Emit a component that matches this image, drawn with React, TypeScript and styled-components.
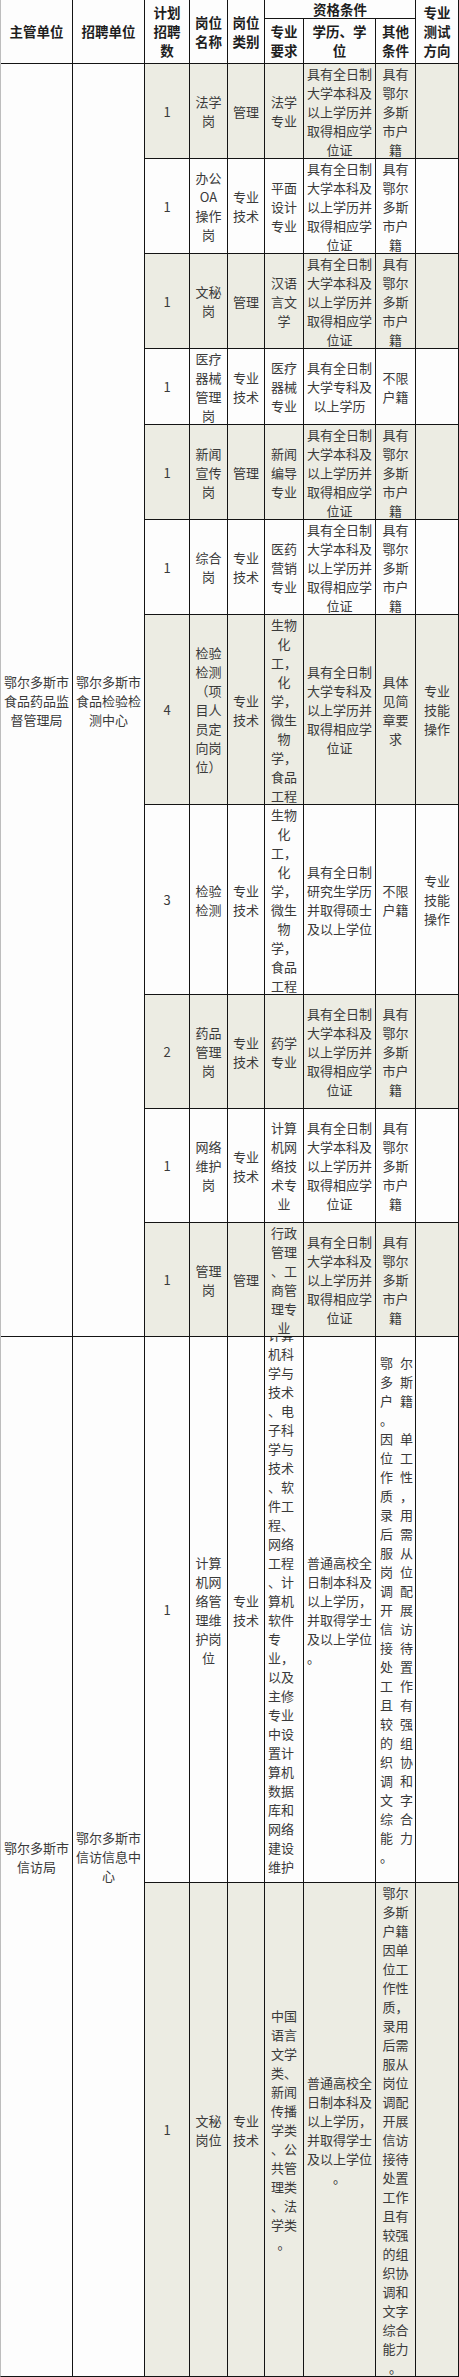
import * as React from 'react'
import styled, { createGlobalStyle } from 'styled-components'

const Global = createGlobalStyle`
  html, body {
    margin: 0;
    padding: 0;
    background: #fff;
  }
  body {
    font-family: "Noto Sans CJK SC", "Noto Sans", sans-serif;
  }
`

type Align = 'center' | 'left' | 'justify'

const Sheet = styled.div`
  display: grid;
  width: 459px;
  box-sizing: border-box;
  grid-template-columns: 71px 71px 44px 37px 36px 38px 71px 39px 42px;
  grid-template-rows: 18px 44px 94px 94px 94px 75px 94px 94px 189px 189px 113px 113px 113px 545px 493px;
  gap: 1px;
  background: #141414;
  border-left: 1px solid #bdbdbd;
  border-right: 1px solid #141414;
  border-bottom: 1px solid #141414;
`

const Cell = styled.div<{
  $col: number
  $row: number
  $colSpan?: number
  $rowSpan?: number
  $shade?: boolean
  $align?: Align
}>`
  grid-column: ${(p) => p.$col} / span ${(p) => p.$colSpan || 1};
  grid-row: ${(p) => p.$row} / span ${(p) => p.$rowSpan || 1};
  display: flex;
  flex-direction: column;
  justify-content: center;
  overflow: hidden;
  background: ${(p) => (p.$shade ? '#ecece3' : '#fdfdfd')};
  color: #3a3a3a;
  font-size: 13px;
  line-height: 19px;
  white-space: nowrap;
  padding: ${(p) => (p.$align === 'justify' ? '0 2px 0 4px' : '0 3px')};
  text-align: ${(p) => (p.$align === 'left' ? 'left' : 'center')};
`

const HeadCell = styled(Cell)`
  color: #1e1e1e;
  font-weight: 700;
  font-size: 13.5px;
  background: #fdfdfd;
`

const Line = styled.span<{ $justify?: boolean }>`
  display: block;
  text-align: ${(p) => (p.$justify ? 'justify' : 'inherit')};
  text-align-last: ${(p) => (p.$justify ? 'justify' : 'auto')};
`

type Row = {
  n: string
  name: string[]
  kind: string[]
  major: string[]
  edu: string[]
  other: string[]
  test?: string[]
  shade?: boolean
  majorAlign?: Align
  eduAlign?: Align
  otherAlign?: Align
}

const BK = ['具有全日制', '大学本科及', '以上学历并', '取得相应学', '位证']
const HJ = ['具有', '鄂尔', '多斯', '市户', '籍']
const JS = ['专业', '技术']
const BIO = ['生物', '化', '工，', '化', '学，', '微生', '物', '学，', '食品', '工程']
const SKILL = ['专业', '技能', '操作']
const PT = ['普通高校全', '日制本科及', '以上学历，', '并取得学士', '及以上学位', '。']

const rows: Row[] = [
  { n: '1', name: ['法学', '岗'], kind: ['管理'], major: ['法学', '专业'], edu: BK, other: HJ, shade: true },
  { n: '1', name: ['办公', 'OA', '操作', '岗'], kind: JS, major: ['平面', '设计', '专业'], edu: BK, other: HJ },
  { n: '1', name: ['文秘', '岗'], kind: ['管理'], major: ['汉语', '言文', '学'], edu: BK, other: HJ, shade: true },
  { n: '1', name: ['医疗', '器械', '管理', '岗'], kind: JS, major: ['医疗', '器械', '专业'], edu: ['具有全日制', '大学专科及', '以上学历'], other: ['不限', '户籍'] },
  { n: '1', name: ['新闻', '宣传', '岗'], kind: ['管理'], major: ['新闻', '编导', '专业'], edu: BK, other: HJ, shade: true },
  { n: '1', name: ['综合', '岗'], kind: JS, major: ['医药', '营销', '专业'], edu: BK, other: HJ },
  {
    n: '4',
    name: ['检验', '检测', '（项', '目人', '员定', '向岗', '位）'],
    kind: JS,
    major: BIO,
    edu: ['具有全日制', '大学专科及', '以上学历并', '取得相应学', '位证'],
    other: ['具体', '见简', '章要', '求'],
    test: SKILL,
    shade: true,
  },
  {
    n: '3',
    name: ['检验', '检测'],
    kind: JS,
    major: BIO,
    edu: ['具有全日制', '研究生学历', '并取得硕士', '及以上学位'],
    other: ['不限', '户籍'],
    test: SKILL,
  },
  { n: '2', name: ['药品', '管理', '岗'], kind: JS, major: ['药学', '专业'], edu: BK, other: HJ, shade: true },
  { n: '1', name: ['网络', '维护', '岗'], kind: JS, major: ['计算', '机网', '络技', '术专', '业'], edu: BK, other: HJ },
  { n: '1', name: ['管理', '岗'], kind: ['管理'], major: ['行政', '管理', '、工', '商管', '理专', '业'], edu: BK, other: HJ, shade: true },
  {
    n: '1',
    name: ['计算', '机网', '络管', '理维', '护岗', '位'],
    kind: JS,
    major: [
      '计算', '机科', '学与', '技术', '、电', '子科', '学与', '技术', '、软', '件工',
      '程、', '网络', '工程', '、计', '算机', '软件', '专', '业，', '以及', '主修',
      '专业', '中设', '置计', '算机', '数据', '库和', '网络', '建设', '维护', '，',
    ],
    majorAlign: 'left',
    edu: PT,
    eduAlign: 'left',
    other: [
      '鄂尔', '多斯', '户籍', '。', '因单', '位工', '作性', '质，', '录用', '后需',
      '服从', '岗位', '调配', '开展', '信访', '接待', '处置', '工作', '且有', '较强',
      '的组', '织协', '调和', '文字', '综合', '能力', '。',
    ],
    otherAlign: 'justify',
  },
  {
    n: '1',
    name: ['文秘', '岗位'],
    kind: JS,
    major: ['中国', '语言', '文学', '类、', '新闻', '传播', '学类', '、公', '共管', '理类', '、法', '学类', '。'],
    edu: PT,
    other: [
      '鄂尔', '多斯', '户籍', '因单', '位工', '作性', '质，', '录用', '后需', '服从',
      '岗位', '调配', '开展', '信访', '接待', '处置', '工作', '且有', '较强', '的组',
      '织协', '调和', '文字', '综合', '能力', '。',
    ],
    shade: true,
  },
]

const Lines = ({ items, justify }: { items: string[]; justify?: boolean }) => (
  <>
    {items.map((t, i) => (
      <Line key={i} $justify={justify}>
        {t}
      </Line>
    ))}
  </>
)

export default function App() {
  return (
    <>
      <Global />
      <Sheet>
        <HeadCell $col={1} $row={1} $rowSpan={2}>主管单位</HeadCell>
        <HeadCell $col={2} $row={1} $rowSpan={2}>招聘单位</HeadCell>
        <HeadCell $col={3} $row={1} $rowSpan={2}>
          <Lines items={['计划', '招聘', '数']} />
        </HeadCell>
        <HeadCell $col={4} $row={1} $rowSpan={2}>
          <Lines items={['岗位', '名称']} />
        </HeadCell>
        <HeadCell $col={5} $row={1} $rowSpan={2}>
          <Lines items={['岗位', '类别']} />
        </HeadCell>
        <HeadCell $col={6} $row={1} $colSpan={3}>资格条件</HeadCell>
        <HeadCell $col={6} $row={2}>
          <Lines items={['专业', '要求']} />
        </HeadCell>
        <HeadCell $col={7} $row={2}>
          <Lines items={['学历、学', '位']} />
        </HeadCell>
        <HeadCell $col={8} $row={2}>
          <Lines items={['其他', '条件']} />
        </HeadCell>
        <HeadCell $col={9} $row={1} $rowSpan={2}>
          <Lines items={['专业', '测试', '方向']} />
        </HeadCell>

        <Cell $col={1} $row={3} $rowSpan={11}>
          <Lines items={['鄂尔多斯市', '食品药品监', '督管理局']} />
        </Cell>
        <Cell $col={2} $row={3} $rowSpan={11}>
          <Lines items={['鄂尔多斯市', '食品检验检', '测中心']} />
        </Cell>
        <Cell $col={1} $row={14} $rowSpan={2}>
          <Lines items={['鄂尔多斯市', '信访局']} />
        </Cell>
        <Cell $col={2} $row={14} $rowSpan={2}>
          <Lines items={['鄂尔多斯市', '信访信息中', '心']} />
        </Cell>

        {rows.map((r, i) => {
          const row = i + 3
          return (
            <React.Fragment key={i}>
              <Cell $col={3} $row={row} $shade={r.shade}>{r.n}</Cell>
              <Cell $col={4} $row={row} $shade={r.shade}>
                <Lines items={r.name} />
              </Cell>
              <Cell $col={5} $row={row} $shade={r.shade}>
                <Lines items={r.kind} />
              </Cell>
              <Cell $col={6} $row={row} $shade={r.shade} $align={r.majorAlign}>
                <Lines items={r.major} />
              </Cell>
              <Cell $col={7} $row={row} $shade={r.shade} $align={r.eduAlign}>
                <Lines items={r.edu} />
              </Cell>
              <Cell $col={8} $row={row} $shade={r.shade} $align={r.otherAlign}>
                <Lines items={r.other} justify={r.otherAlign === 'justify'} />
              </Cell>
              <Cell $col={9} $row={row} $shade={r.shade}>
                {r.test && <Lines items={r.test} />}
              </Cell>
            </React.Fragment>
          )
        })}
      </Sheet>
    </>
  )
}
